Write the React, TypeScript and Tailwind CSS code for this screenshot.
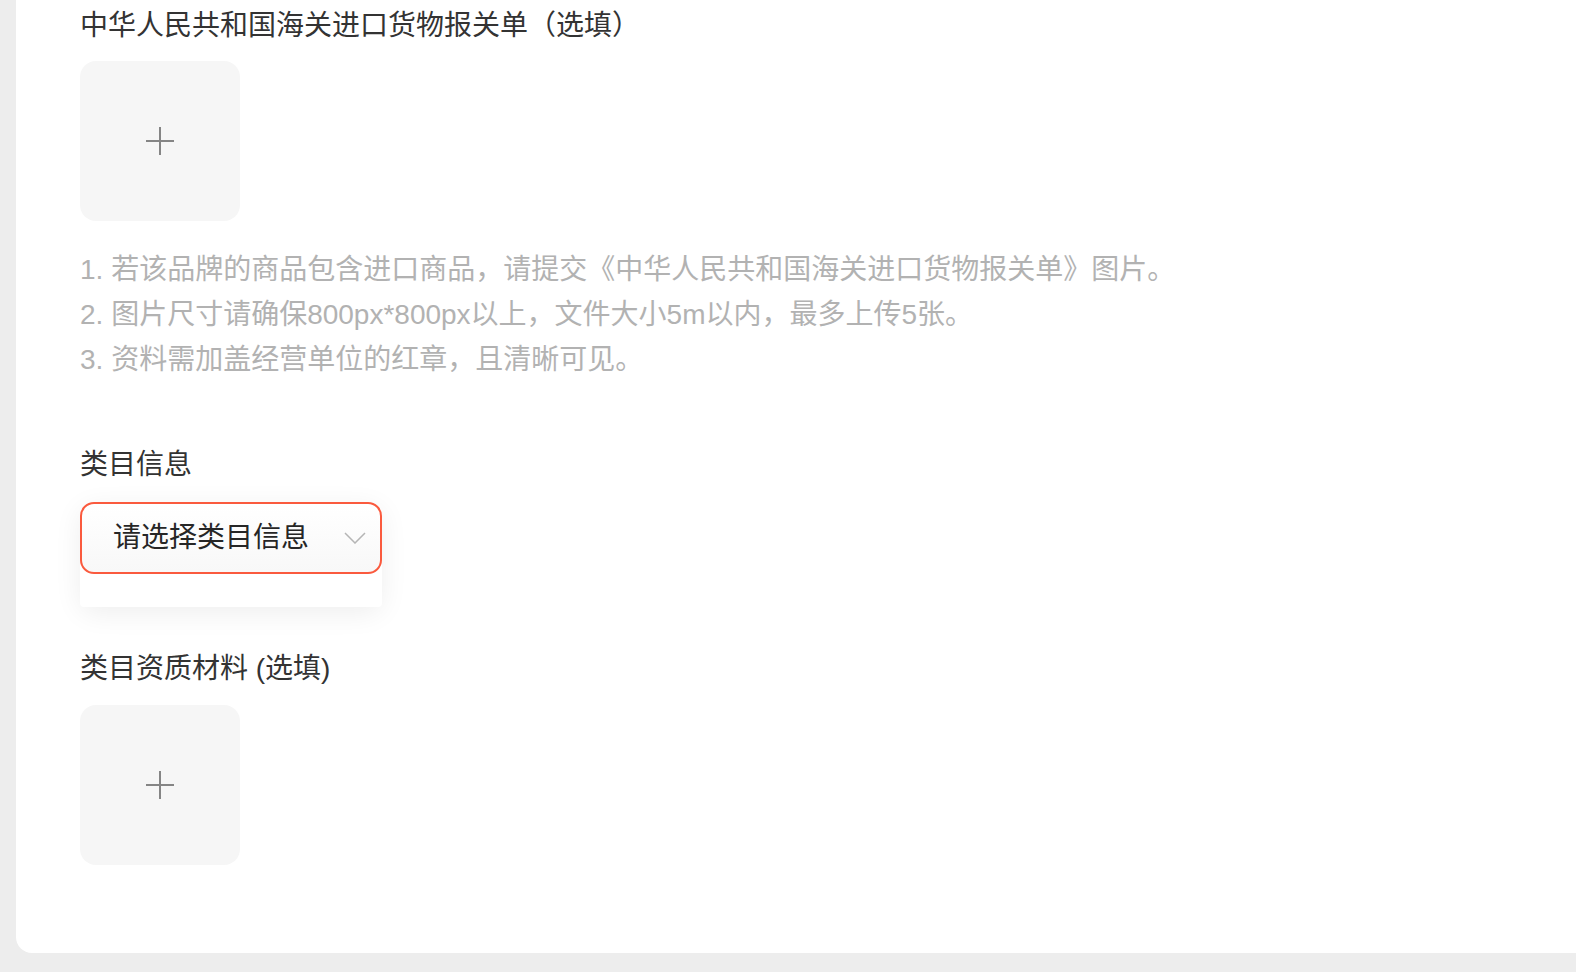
import { useState } from "react";

type UploadBoxProps = {
  onClick?: () => void;
};

function UploadBox({ onClick }: UploadBoxProps) {
  return (
    <button
      type="button"
      onClick={onClick}
      className="w-[160px] h-[160px] rounded-[16px] bg-[#f6f6f6] flex items-center justify-center"
    >
      <svg width="30" height="30" viewBox="0 0 30 30" shapeRendering="crispEdges">
        <path d="M15 1v28M1 15h28" stroke="#858585" strokeWidth="2" fill="none" />
      </svg>
    </button>
  );
}

const tips = [
  "1. 若该品牌的商品包含进口商品，请提交《中华人民共和国海关进口货物报关单》图片。",
  "2. 图片尺寸请确保800px*800px以上，文件大小5m以内，最多上传5张。",
  "3. 资料需加盖经营单位的红章，且清晰可见。",
];

export default function App() {
  const [category, setCategory] = useState("");

  return (
    <div
      className="min-h-[972px] bg-[#ededed] pl-[16px] pb-[19px] text-[#333]"
      style={{ fontFamily: '"Liberation Sans", "Noto Sans CJK SC", sans-serif' }}
    >
      <div className="bg-white rounded-bl-[16px] pl-[64px] pt-[6px] pb-[88px]">
        {/* 报关单 */}
        <div className="text-[28px] leading-[40px]">中华人民共和国海关进口货物报关单（选填）</div>
        <div className="mt-[15px]">
          <UploadBox />
        </div>
        <div className="mt-[26px] text-[28px] leading-[45px] text-[#b2b2b2]">
          {tips.map((t) => (
            <p key={t}>{t}</p>
          ))}
        </div>

        {/* 类目信息 */}
        <div className="mt-[63px] text-[28px] leading-[40px]">类目信息</div>
        <div className="mt-[17px] w-[302px] shadow-[0_6px_28px_rgba(0,0,0,0.07)] rounded-[14px]">
          <button
            type="button"
            onClick={() => setCategory(category)}
            className="w-full h-[72px] rounded-[14px] border-2 border-[#fa5a3e] bg-gradient-to-b from-white to-[#f8f8f8] flex items-center justify-between pl-[31px] pr-[14px]"
          >
            <span className="text-[28px] text-[#262626]">{category || "请选择类目信息"}</span>
            <svg width="22" height="12" viewBox="0 0 22 12">
              <path d="M1 1l10 10L21 1" stroke="#b5b5b5" strokeWidth="1.5" fill="none" />
            </svg>
          </button>
          <div className="mt-[3px] h-[30px] bg-white rounded-[4px]"></div>
        </div>

        {/* 类目资质材料 */}
        <div className="mt-[42px] text-[28px] leading-[40px]">类目资质材料 (选填)</div>
        <div className="mt-[16px]">
          <UploadBox />
        </div>
      </div>
    </div>
  );
}
